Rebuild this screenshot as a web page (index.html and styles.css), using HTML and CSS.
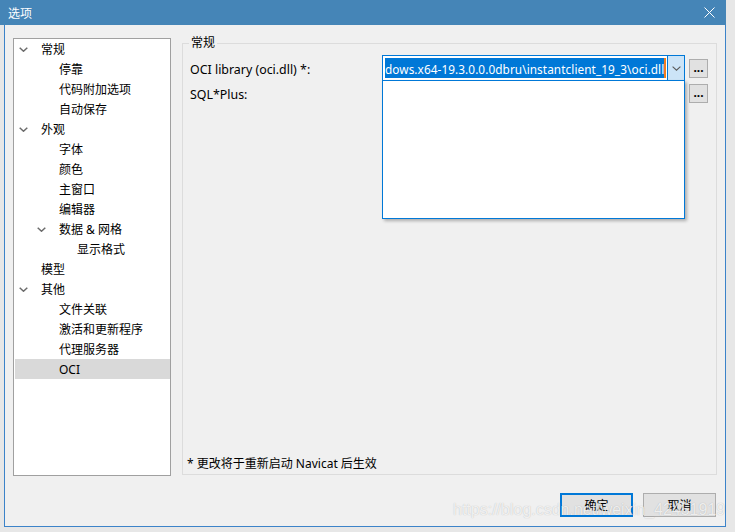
FILE: index.html
```html
<!DOCTYPE html>
<html lang="zh-CN">
<head>
<meta charset="utf-8">
<title>选项</title>
<link rel="stylesheet" href="styles.css">
</head>
<body>
<div class="window">
  <div class="titlebar">
    <span class="title">选项</span>
    <svg class="close" width="11" height="11" viewBox="0 0 11 11"><path d="M0.5 0.5 L10.5 10.5 M10.5 0.5 L0.5 10.5" stroke="#fff" stroke-width="1" fill="none"/></svg>
  </div>
  <div class="client">
    <div class="main">
      <div class="tree">
        <div class="item l0"><span class="twisty"><svg width="9" height="5" viewBox="0 0 9 5"><path d="M0.7 0.7 L4.5 4.2 L8.3 0.7" stroke="#6b6b6b" stroke-width="1.5" fill="none"/></svg></span>常规</div>
        <div class="item l1"><span class="twisty"></span>停靠</div>
        <div class="item l1"><span class="twisty"></span>代码附加选项</div>
        <div class="item l1"><span class="twisty"></span>自动保存</div>
        <div class="item l0"><span class="twisty"><svg width="9" height="5" viewBox="0 0 9 5"><path d="M0.7 0.7 L4.5 4.2 L8.3 0.7" stroke="#6b6b6b" stroke-width="1.5" fill="none"/></svg></span>外观</div>
        <div class="item l1"><span class="twisty"></span>字体</div>
        <div class="item l1"><span class="twisty"></span>颜色</div>
        <div class="item l1"><span class="twisty"></span>主窗口</div>
        <div class="item l1"><span class="twisty"></span>编辑器</div>
        <div class="item l1"><span class="twisty"><svg width="9" height="5" viewBox="0 0 9 5"><path d="M0.7 0.7 L4.5 4.2 L8.3 0.7" stroke="#6b6b6b" stroke-width="1.5" fill="none"/></svg></span>数据 &amp; 网格</div>
        <div class="item l2"><span class="twisty"></span>显示格式</div>
        <div class="item l0"><span class="twisty"></span>模型</div>
        <div class="item l0"><span class="twisty"><svg width="9" height="5" viewBox="0 0 9 5"><path d="M0.7 0.7 L4.5 4.2 L8.3 0.7" stroke="#6b6b6b" stroke-width="1.5" fill="none"/></svg></span>其他</div>
        <div class="item l1"><span class="twisty"></span>文件关联</div>
        <div class="item l1"><span class="twisty"></span>激活和更新程序</div>
        <div class="item l1"><span class="twisty"></span>代理服务器</div>
        <div class="item l1 selected"><span class="twisty"></span>OCI</div>
      </div>
      <fieldset class="group">
        <legend>常规</legend>
        <div class="rows">
          <div class="label">OCI library (oci.dll) *:</div>
          <div class="combo">
            <div class="combo-text"><span class="sel">dows.x64-19.3.0.0.0dbru\instantclient_19_3\oci.dll</span></div>
            <span class="caret"></span>
            <div class="combo-btn"><svg width="9" height="5" viewBox="0 0 9 5"><path d="M0.6 0.6 L4.5 4.2 L8.4 0.6" stroke="#5a5a5a" stroke-width="1.1" fill="none"/></svg></div>
            <div class="droplist"></div>
          </div>
          <button class="dots">...</button>
          <div class="label">SQL*Plus:</div>
          <div class="field"></div>
          <button class="dots">...</button>
        </div>
        <div class="note">* 更改将于重新启动 Navicat 后生效</div>
      </fieldset>
    </div>
    <div class="buttons">
      <button class="btn ok">确定</button>
      <button class="btn">取消</button>
    </div>
  </div>
</div>
<div class="watermark">https://blog.csdn.net/weixin_42451919</div>
</body>
</html>
```
FILE: styles.css
```css
* { box-sizing: border-box; }
html, body { margin: 0; padding: 0; }
body {
  width: 735px;
  height: 532px;
  overflow: hidden;
  position: relative;
  background: #e7e7e7;
  font-family: "Noto Sans", "Noto Sans CJK SC", sans-serif;
  font-size: 12px;
  color: #000;
}
.window { width: 726px; }
.titlebar {
  height: 25px;
  background: #4585b7;
  color: #fff;
  display: flex;
  align-items: center;
  justify-content: space-between;
  padding: 0 11px 0 8px;
}
.title { font-family: "Noto Sans CJK SC", sans-serif; font-size: 12px; line-height: 16px; }
.close { display: block; }
.client {
  margin-left: 4px;
  height: 502px;
  background: #f0f0f0;
  border: 1px solid #3c83c9;
  border-top: 0;
}
.main {
  display: flex;
  align-items: flex-start;
  padding-left: 8px;
}
.tree {
  width: 158px;
  height: 438px;
  margin-top: 13px;
  background: #fff;
  border: 1px solid #a0a0a0;
}
.item {
  display: flex;
  align-items: center;
  height: 20px;
  margin-left: 1px;
  padding-top: 1px;
  line-height: 16px;
  white-space: nowrap;
}
.item.l0 { padding-left: 4px; }
.item.l1 { padding-left: 22px; }
.item.l2 { padding-left: 40px; }
.item.selected { background: #d9d9d9; }
.twisty { width: 22px; flex: none; display: flex; align-items: center; }
.twisty svg { display: block; margin-top: -1px; }

.group {
  width: 535px;
  height: 440px;
  margin: 10px 0 0 11px;
  border: 1px solid #dcdcdc;
  padding: 0 6px 2px 6px;
  display: flex;
  flex-direction: column;
  min-width: 0;
}
.group legend {
  padding: 0 2px;
  line-height: 16px;
  font-size: 12px;
}
.rows {
  display: grid;
  grid-template-columns: 188px 303px 19px;
  grid-template-rows: 26px 20px;
  column-gap: 4px;
  row-gap: 2px;
  align-items: center;
  padding-left: 1px;
  margin-top: 4px;
}
.label { white-space: nowrap; line-height: 16px; padding-top: 3px; font-size: 12.4px; }
.combo {
  position: relative;
  height: 26px;
  border: 1px solid #0078d7;
  background: #fff;
  display: flex;
  align-items: center;
}
.combo-text {
  flex: 1;
  height: 20px;
  margin-left: 2px;
  display: flex;
  overflow: hidden;
  min-width: 0;
}
.sel {
  flex: 1;
  background: #0078d7;
  color: #fff;
  height: 20px;
  line-height: 20px;
  padding-top: 1px;
  font-size: 11.8px;
  letter-spacing: 0.07px;
  text-align: right;
  white-space: nowrap;
}
.caret { width: 2px; height: 20px; background: #f07d1e; flex: none; }
.combo-btn {
  width: 17px;
  height: 100%;
  flex: none;
  margin-left: 1px;
  background: #cce4f7;
  border-left: 1px solid #0078d7;
  display: flex;
  align-items: center;
  justify-content: center;
}
.combo-btn svg { display: block; }
.droplist {
  position: absolute;
  left: -1px;
  top: 24px;
  width: 303px;
  height: 139px;
  background: #fff;
  border: 1px solid #0078d7;
  box-shadow: 2px 2px 3px rgba(0, 0, 0, 0.28);
  z-index: 2;
}
.field { height: 20px; }
.dots {
  width: 19px;
  height: 19px;
  padding: 0 0 3px 0;
  margin: 0;
  border: 1px solid #adadad;
  background: #e1e1e1;
  font: bold 12px/12px "Noto Sans", sans-serif;
  color: #000;
  display: flex;
  align-items: flex-end;
  justify-content: center;
}
.note {
  margin-top: auto;
  margin-left: -2px;
  line-height: 16px;
  padding-top: 1px;
  white-space: nowrap;
}
.buttons {
  display: flex;
  justify-content: flex-end;
  gap: 10px;
  padding-right: 9px;
  margin-top: 17px;
}
.btn {
  width: 73px;
  height: 24px;
  margin: 0;
  padding: 1px 0 0 0;
  background: #e1e1e1;
  border: 1px solid #adadad;
  font: 12px/16px "Noto Sans", "Noto Sans CJK SC", sans-serif;
  color: #000;
}
.btn.ok { border: 2px solid #0078d7; }
.watermark {
  position: absolute;
  left: 453px;
  top: 500px;
  font-family: "Liberation Sans", Arial, sans-serif;
  font-size: 16px;
  line-height: 20px;
  color: rgba(255, 255, 255, 0.78);
  text-shadow: 0 0 1px rgba(0, 0, 0, 0.25);
  white-space: nowrap;
}
```
